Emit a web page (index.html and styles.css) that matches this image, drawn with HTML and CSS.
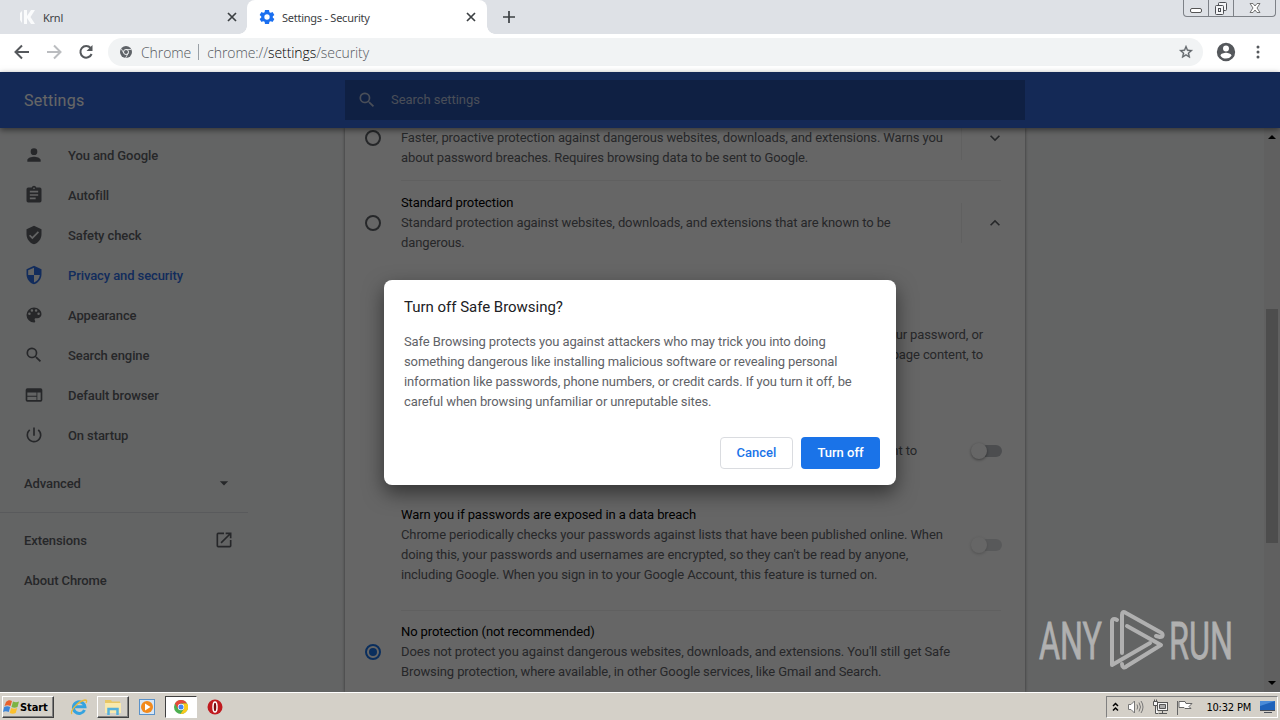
FILE: index.html
```
<!DOCTYPE html>
<html lang="en">
<head>
    <meta charset="UTF-8">
    <meta name="viewport" content="width=device-width, initial-scale=1.0">
    <title>Settings - Security</title>
    <link rel="stylesheet" href="styles.css">
</head>
<body>
    <div class="tabs">
        <div class="tab">
            <svg class="tab-icon" width="16" height="16" viewBox="0 0 16 16"><path fill="#fafbfc" d="M0 4l2-2v12l-2-3zM4 1h3v14H4zM7 7l4-6h4l-4.500 7 4.500 7h-4L7 9z"/></svg>
            <span class="tab-title">Krnl</span>
            <svg class="tab-close" width="10" height="10" viewBox="0 0 10 10"><path d="M1 1l8 8M9 1L1 9"/></svg>
        </div>
        <div class="tab active">
            <svg class="tab-icon" width="16" height="16" viewBox="0 0 24 24"><path fill="#1a6ff0" d="M20.7 13l.1-1-.1-1 2-1.600c.3-.2.3-.5.1-.8l-2.200-3.700c-.1-.2-.4-.3-.7-.2l-2.500 1-1.800-1-.4-2.600c0-.3-.2-.5-.5-.5H9.300c-.3 0-.5.2-.5.5L8.400 4.700l-1.800 1-2.500-1c-.3-.1-.6 0-.7.2L1.200 8.600c-.2.3-.1.6.1.8l2 1.600v2l-2 1.600c-.2.2-.3.5-.1.8l2.200 3.700c.1.2.4.3.7.2l2.500-1 1.800 1 .4 2.600c0 .3.2.5.5.5h5.400c.3 0 .5-.2.500-.5l.4-2.600 1.800-1 2.500 1c.3.1.6 0 .7-.2l2.200-3.700c.2-.3.1-.6-.1-.8zM12 16a4 4 0 1 1 0-8 4 4 0 0 1 0 8z"/></svg>
            <span class="tab-title">Settings - Security</span>
            <svg class="tab-close" width="10" height="10" viewBox="0 0 10 10"><path d="M1 1l8 8M9 1L1 9"/></svg>
        </div>
        <svg class="new-tab" width="12" height="12" viewBox="0 0 12 12"><path d="M6 0v12M0 6h12"/></svg>
        <div class="window-buttons">
            <span><svg width="14" height="16" viewBox="0 0 14 16"><rect x="1.500" y="8.500" width="11" height="4" rx="1.500" fill="#fff" stroke="#555"/></svg></span>
            <span><svg width="14" height="16" viewBox="0 0 14 16"><g fill="#f4f5f7" stroke="#4d4f54"><rect x="4.500" y="2.500" width="8" height="8" rx="1"/><rect x="1.500" y="5.500" width="8" height="9" rx="1"/><rect x="4.500" y="8.500" width="2" height="3"/></g></svg></span>
            <span class="wide"><svg width="14" height="16" viewBox="0 0 14 16"><path d="M2 3.500h3l2 2.500 2-2.500h3L9 8l3 4.500H9L7 10l-2 2.500H2L5 8z" fill="#fff" stroke="#666" stroke-width=".9"/></svg></span>
        </div>
    </div>

    <div class="toolbar">
        <svg class="nav" width="16" height="16" viewBox="0 0 16 16"><path d="M15 8H2M8 1.500L1.500 8 8 14.500"/></svg>
        <svg class="nav off" width="16" height="16" viewBox="0 0 16 16"><path d="M1 8h13M8 1.500L14.500 8 8 14.500"/></svg>
        <svg class="nav" width="16" height="16" viewBox="0 0 16 16"><path d="M12.600 4A5.800 5.800 0 1 0 13.600 10"/><path d="M14.500 1v6h-6z" class="tip"/></svg>
        <div class="address">
            <svg width="12" height="12" viewBox="0 0 12 12"><circle cx="6" cy="6" r="6" fill="#5f6368"/><circle cx="6" cy="6" r="2.500" fill="none" stroke="#f1f3f4"/><path d="M6 3.500h5.300M3.800 7.200L1.200 2.700M8.200 7.200L5.600 12" stroke="#f1f3f4" stroke-width=".8"/></svg>
            <span class="origin">Chrome</span>
            <span class="pipe"></span>
            <span class="url">chrome://<b>settings</b>/security</span>
            <svg class="star" width="16" height="16" viewBox="0 0 24 24"><path fill="#5f6368" stroke="#5f6368" stroke-width=".5" d="M22 9.240l-7.190-.62L12 2 9.190 8.630 2 9.240l5.460 4.730L5.820 21 12 17.270 18.180 21l-1.630-7.030zM12 15.400l-3.760 2.270 1-4.280-3.320-2.880 4.380-.38L12 6.100l1.710 4.040 4.380.38-3.320 2.880 1 4.280z"/></svg>
        </div>
        <svg class="avatar" width="22" height="22" viewBox="0 0 24 24"><path fill="#55585c" d="M12 2a10 10 0 1 0 0 20 10 10 0 0 0 0-20zm0 3a3.200 3.200 0 1 1 0 6.500A3.200 3.200 0 0 1 12 5zm0 14.200a7.200 7.200 0 0 1-6-3.220c.03-2 4-3.080 6-3.080s5.970 1.090 6 3.080a7.200 7.200 0 0 1-6 3.220z"/></svg>
        <svg class="kebab" width="4" height="14" viewBox="0 0 4 14" fill="#55585c"><circle cx="2" cy="2" r="1.500"/><circle cx="2" cy="7" r="1.500"/><circle cx="2" cy="12" r="1.500"/></svg>
    </div>

    <div class="page">
        <header class="header">
            <h1>Settings</h1>
            <div class="search">
                <svg width="20" height="20" viewBox="0 0 24 24"><path d="M15.500 14h-.79l-.28-.27a6.500 6.500 0 1 0-.7.700l.27.280v.79l5 4.990L20.490 19zm-6 0a4.500 4.500 0 1 1 0-9 4.500 4.500 0 0 1 0 9z"/></svg>
                <span>Search settings</span>
            </div>
        </header>

        <div class="main">
            <nav class="menu">
                <a class="item"><svg viewBox="0 0 24 24"><path d="M12 12a4 4 0 1 0 0-8 4 4 0 0 0 0 8zm0 2c-2.670 0-8 1.340-8 4v2h16v-2c0-2.660-5.330-4-8-4z"/></svg>You and Google</a>
                <a class="item"><svg viewBox="0 0 24 24"><path d="M19 3h-4.180a3 3 0 0 0-5.640 0H5a2 2 0 0 0-2 2v14a2 2 0 0 0 2 2h14a2 2 0 0 0 2-2V5a2 2 0 0 0-2-2zm-7 0a1 1 0 1 1 0 2 1 1 0 0 1 0-2zm2 14H7v-2h7zm3-4H7v-2h10zm0-4H7V7h10z"/></svg>Autofill</a>
                <a class="item"><svg viewBox="0 0 24 24"><path d="M12 1L3 5v6c0 5.550 3.840 10.740 9 12 5.160-1.260 9-6.450 9-12V5zm-2 16l-4-4 1.410-1.410L10 14.170l6.590-6.590L18 9z"/></svg>Safety check</a>
                <a class="item selected"><svg viewBox="0 0 24 24"><path d="M12 1L3 5v6c0 5.550 3.840 10.740 9 12 5.160-1.260 9-6.450 9-12V5zm0 10.990h7c-.53 4.120-3.280 7.790-7 8.940V12H5V6.300l7-3.110z"/></svg>Privacy and security</a>
                <a class="item"><svg viewBox="0 0 24 24"><path d="M12 3a9 9 0 0 0 0 18c.83 0 1.500-.67 1.500-1.500 0-.39-.15-.74-.39-1.010-.23-.26-.38-.61-.38-.99 0-.83.67-1.500 1.500-1.500H16a5 5 0 0 0 5-5c0-4.420-4.030-8-9-8zm-5.500 9a1.500 1.500 0 1 1 0-3 1.500 1.500 0 0 1 0 3zm3-4a1.500 1.500 0 1 1 0-3 1.500 1.500 0 0 1 0 3zm5 0a1.500 1.500 0 1 1 0-3 1.500 1.500 0 0 1 0 3zm3 4a1.500 1.500 0 1 1 0-3 1.500 1.500 0 0 1 0 3z"/></svg>Appearance</a>
                <a class="item"><svg viewBox="0 0 24 24"><path d="M15.500 14h-.79l-.28-.27a6.500 6.500 0 1 0-.7.700l.27.280v.79l5 4.990L20.490 19zm-6 0a4.500 4.500 0 1 1 0-9 4.500 4.500 0 0 1 0 9z"/></svg>Search engine</a>
                <a class="item"><svg viewBox="0 0 24 24"><path d="M20 4H4a2 2 0 0 0-2 2v12a2 2 0 0 0 2 2h16a2 2 0 0 0 2-2V6a2 2 0 0 0-2-2zm-5 14H4v-4h11zm0-5H4V9h11zm5 5h-4V9h4z"/></svg>Default browser</a>
                <a class="item"><svg viewBox="0 0 24 24"><path d="M13 3h-2v10h2zm4.830 2.170l-1.420 1.420A6.920 6.920 0 0 1 19 12a7 7 0 1 1-11.420-5.420L6.170 5.170A8.930 8.930 0 0 0 3 12a9 9 0 1 0 14.830-6.830z"/></svg>On startup</a>
                <a class="item plain advanced">Advanced<svg viewBox="0 0 24 24"><path d="M7 10l5 5 5-5z"/></svg></a>
                <div class="separator"></div>
                <a class="item plain">Extensions<svg viewBox="0 0 24 24"><path d="M19 19H5V5h7V3H5a2 2 0 0 0-2 2v14a2 2 0 0 0 2 2h14a2 2 0 0 0 2-2v-7h-2zM14 3v2h3.590l-9.830 9.830 1.410 1.410L19 6.410V10h2V3z"/></svg></a>
                <a class="item plain">About Chrome</a>
            </nav>

            <div class="card">
                <div class="option enhanced">
                    <span class="radio"></span>
                    <div class="text">
                        <p>Faster, proactive protection against dangerous websites, downloads, and extensions. Warns you<br>about password breaches. Requires browsing data to be sent to Google.</p>
                    </div>
                    <div class="expand"><svg width="20" height="20" viewBox="0 0 24 24"><path d="M16.590 8.590L12 13.170 7.410 8.590 6 10l6 6 6-6z"/></svg></div>
                </div>
                <div class="option standard">
                    <span class="radio"></span>
                    <div class="text">
                        <h2>Standard protection</h2>
                        <p>Standard protection against websites, downloads, and extensions that are known to be<br>dangerous.</p>
                    </div>
                    <div class="expand"><svg width="20" height="20" viewBox="0 0 24 24"><path d="M12 8l-6 6 1.410 1.410L12 10.830l4.590 4.580L18 14z"/></svg></div>
                </div>
                <div class="details">
                    <p class="bullets">ur password, or<br>page content, to</p>
                    <div class="toggle-row">
                        <p class="report">nt to</p>
                        <span class="toggle"></span>
                    </div>
                    <div class="toggle-row breach">
                        <div class="text">
                            <h2>Warn you if passwords are exposed in a data breach</h2>
                            <p>Chrome periodically checks your passwords against lists that have been published online. When<br>doing this, your passwords and usernames are encrypted, so they can't be read by anyone,<br>including Google. When you sign in to your Google Account, this feature is turned on.</p>
                        </div>
                        <span class="toggle disabled"></span>
                    </div>
                </div>
                <div class="option none">
                    <span class="radio checked"></span>
                    <div class="text">
                        <h2>No protection (not recommended)</h2>
                        <p>Does not protect you against dangerous websites, downloads, and extensions. You'll still get Safe<br>Browsing protection, where available, in other Google services, like Gmail and Search.</p>
                    </div>
                </div>
            </div>

            <div class="scrollbar">
                <svg width="8" height="4" viewBox="0 0 8 4"><path d="M0 4l4-4 4 4z"/></svg>
                <div class="thumb"></div>
                <svg width="8" height="4" viewBox="0 0 8 4"><path d="M0 0h8L4 4z"/></svg>
            </div>
        </div>

        <div class="backdrop">
            <div class="dialog">
                <h3>Turn off Safe Browsing?</h3>
                <p>Safe Browsing protects you against attackers who may trick you into doing<br>something dangerous like installing malicious software or revealing personal<br>information like passwords, phone numbers, or credit cards. If you turn it off, be<br>careful when browsing unfamiliar or unreputable sites.</p>
                <div class="actions">
                    <button class="cancel">Cancel</button>
                    <button class="confirm">Turn off</button>
                </div>
            </div>
        </div>

        <svg class="watermark" width="210" height="70" viewBox="0 0 210 70">
            <g class="letters">
                <text x="1" y="51" textLength="63" lengthAdjust="spacingAndGlyphs">ANY</text>
                <text x="131" y="51" textLength="64" lengthAdjust="spacingAndGlyphs">RUN</text>
            </g>
            <g fill="none" stroke="#b0b0b0" stroke-width="4" stroke-linecap="round" stroke-linejoin="round">
                <path d="M79 12c-3-2-5-1-5 2v43L112 35"/>
                <path d="M84 45V7c0-3 1-4 4-2l34 19c4 2 3 5 0 5l-4-1"/>
                <path d="M89 18l34 19-34 21c-3 3-5 1-5-2"/>
            </g>
        </svg>
    </div>

    <div class="taskbar">
        <div class="start">
            <svg width="17" height="16" viewBox="0 0 17 16"><path fill="#e8612c" d="M3 3c2-2 4-2 6-1L7.500 7c-2-1-4-1-6 0z"/><path fill="#7cb342" d="M10 2.500c2 1 4 1 6 0L14.500 8c-2 1-4 1-6 0z"/><path fill="#3d85d8" d="M1.200 8c2-1 4-1 6 0L5.700 13c-2-1-4-1-5.700 0z"/><path fill="#fbc02d" d="M8.200 9c2 1 4 1 6 0l-1.500 5c-2 1-4 1-6 0z"/></svg>
            Start
        </div>
        <div class="launch ie">
            <svg width="18" height="18" viewBox="0 0 18 18"><path fill="none" stroke="#35a3df" stroke-width="3" d="M14.500 12a5.800 5.800 0 1 1 .4-3.300H5"/><path fill="none" stroke="#e9b93a" stroke-width="1.300" d="M2 16C-1 14 8 3 15 2c2 0 2 1 1 3"/></svg>
        </div>
        <div class="launch raised">
            <svg width="18" height="18" viewBox="0 0 18 18"><path fill="#e8c766" d="M1 2h6l1 1.500h8V15H1z"/><path fill="#f9e9ad" d="M1 5h16v10H1z"/><path fill="none" stroke="#55b1dc" stroke-width="2.500" d="M4.500 17v-6h9v6"/></svg>
        </div>
        <div class="launch">
            <svg width="16" height="16" viewBox="0 0 16 16"><rect x=".5" y=".5" width="15" height="15" fill="#d6e6f6" stroke="#5a92c9"/><circle cx="8" cy="8" r="6" fill="#f28a1c"/><path fill="#fff" d="M6 4.500v7L11.500 8z"/></svg>
        </div>
        <div class="launch pressed">
            <svg width="14" height="14" viewBox="0 0 14 14"><circle cx="7" cy="7" r="7" fill="#4caf50"/><path fill="#e5493a" d="M.9 3.500A7 7 0 0 1 13.100 3.500H7L4 8.800z"/><path fill="#fbc91b" d="M13.100 3.500A7 7 0 0 1 6.500 14L10 8.800 8.500 3.500z"/><circle cx="7" cy="7" r="3.200" fill="#fff"/><circle cx="7" cy="7" r="2.500" fill="#4285f4"/></svg>
        </div>
        <div class="launch opera">
            <svg width="16" height="16" viewBox="0 0 16 16"><circle cx="8" cy="8" r="7.500" fill="#c01a1f"/><ellipse cx="8" cy="8" rx="2" ry="5" fill="#7b0a0e" stroke="#fff" stroke-width="1.500"/></svg>
        </div>
        <div class="tray">
            <svg width="7" height="10" viewBox="0 0 7 10"><path fill="none" stroke="#000" stroke-width="1.500" d="M1 4l2.500-2.500L6 4M1 8.500L3.500 6 6 8.500"/></svg>
            <svg class="sound" width="16" height="14" viewBox="0 0 16 14"><g fill="none" stroke="#777"><path fill="#fff" d="M.5 4.500H3L6.500 1v12L3 9.500H.5z"/><path d="M9 4.500q1.500 2.500 0 5M11 2.500q3 4.500 0 9M13 1q4 6 0 12"/></g></svg>
            <svg class="network" width="17" height="16" viewBox="0 0 17 16"><g fill="#f5f5f5" stroke="#555"><rect x="5.500" y="3.500" width="10" height="8"/><path fill="#aaa" d="M7.500 5.500h6v4h-6z"/><path d="M7 14.500h8M10.500 12v2"/><path d="M1.500 2.500h4v4h-4zM3.500 6.500v8h3M2.500.5v2M4.500.5v2"/></g></svg>
            <svg class="flag" width="17" height="15" viewBox="0 0 17 15"><path fill="#fff" stroke="#666" d="M1.500 1v14M3 1.500h6l1 2h6l-3 3 2 2H9l-1-1H3z"/></svg>
            <span class="clock">10:32 PM</span>
            <svg class="desktop" width="16" height="14" viewBox="0 0 16 14"><path fill="#1e62ba" d="M1 1h15v9H1z"/><path fill="#4a8bd8" d="M1 1h15L1 6z"/><path fill="#4a4f58" d="M1 10h15v1H1zM5 12h8v1H5z"/></svg>
        </div>
    </div>
</body>
</html>
```
FILE: styles.css
```
* {
    box-sizing: border-box;
}

body {
    margin: 0;
    width: 1280px;
    height: 720px;
    overflow: hidden;
    display: flex;
    flex-direction: column;
    font-family: Roboto, sans-serif;
    font-size: 13px;
    background-color: #fff;
}

h1, h2, h3, p {
    margin: 0;
    font-weight: 400;
}

svg {
    display: block;
    flex-shrink: 0;
}

/* Tab strip */
.tabs {
    height: 34px;
    flex-shrink: 0;
    display: flex;
    background-color: #dee1e6;
}

.tab {
    width: 247px;
    height: 34px;
    padding: 0 10px 0 20px;
    display: flex;
    align-items: center;
}

.tab.active {
    position: relative;
    width: 240px;
    padding: 0 11px 0 12px;
    background-color: #fff;
    border-radius: 8px 8px 0 0;
}

.tab.active::before, .tab.active::after {
    content: "";
    position: absolute;
    bottom: 0;
    width: 8px;
    height: 8px;
}

.tab.active::before {
    left: -8px;
    background: radial-gradient(circle at 0 0, transparent 7.5px, #fff 8px);
}

.tab.active::after {
    right: -8px;
    background: radial-gradient(circle at 100% 0, transparent 7.5px, #fff 8px);
}

.tab-title {
    margin-left: 7px;
    flex: 1;
    font-family: "Noto Sans", sans-serif;
    font-size: 11px;
    letter-spacing: -0.25px;
    color: #3c4043;
}

.tab-close path, .new-tab path {
    fill: none;
    stroke: #3c4043;
    stroke-width: 1.7;
}

.new-tab {
    margin: 11px 0 0 16px;
}

.window-buttons {
    margin-left: auto;
    margin-right: 4px;
    height: 17px;
    display: flex;
    border: 1px solid #7d8187;
    border-top: none;
    border-radius: 0 0 4px 4px;
}

.window-buttons span {
    width: 25px;
    display: flex;
    justify-content: center;
    border-right: 1px solid #7d8187;
}

.window-buttons .wide {
    width: 41px;
    border-right: none;
}

/* Toolbar */
.toolbar {
    height: 38px;
    flex-shrink: 0;
    padding: 0 15px 2px 14px;
    display: flex;
    align-items: center;
    gap: 16px;
}

.nav path {
    fill: none;
    stroke: #55585c;
    stroke-width: 2;
}

.nav .tip {
    fill: #55585c;
    stroke: none;
}

.nav.off path {
    stroke: #bbbdc0;
}

.address {
    width: 1095px;
    height: 28px;
    flex-shrink: 0;
    margin-left: -2px;
    padding: 0 9px 0 12px;
    display: flex;
    align-items: center;
    border-radius: 14px;
    background-color: #f1f3f4;
    font-family: "Open Sans", sans-serif;
    font-weight: 300;
    font-size: 14px;
    letter-spacing: -0.08px;
    color: #55595e;
}

.origin {
    margin-left: 9px;
}

.pipe {
    width: 1px;
    height: 16px;
    margin: 0 8px 0 7px;
    background-color: #9aa0a6;
}

.url b {
    font-weight: 300;
    color: #000;
}

.star {
    margin-left: auto;
}

.avatar {
    margin-left: -4px;
}

.kebab {
    margin-left: 3px;
}

/* Settings page */
.page {
    position: relative;
    height: 620px;
    flex-shrink: 0;
    display: flex;
    flex-direction: column;
    background-color: #f8f9fa;
}

.header {
    position: relative;
    height: 56px;
    flex-shrink: 0;
    display: flex;
    align-items: center;
    background-color: #3367d6;
    box-shadow: 0 2px 6px rgba(0, 0, 0, 0.5);
}

.header h1 {
    width: 345px;
    padding-left: 24px;
    font-size: 16px;
    letter-spacing: 0.25px;
    color: #fff;
}

.search {
    width: 680px;
    height: 40px;
    padding: 0 0 1px 12px;
    display: flex;
    align-items: center;
    gap: 14px;
    background-color: rgba(0, 0, 0, 0.22);
    letter-spacing: -0.05px;
    color: #b7c2db;
}

.search svg {
    fill: #b7c2db;
}

.main {
    height: 564px;
    display: flex;
    overflow: hidden;
}

.menu {
    width: 345px;
    padding-top: 7px;
}

.item {
    width: 266px;
    height: 40px;
    padding-left: 24px;
    display: flex;
    align-items: center;
    gap: 24px;
    font-weight: 500;
    letter-spacing: -0.1px;
    color: #5f6368;
}

.item svg {
    width: 20px;
    height: 20px;
    fill: #5f6368;
}

.item.selected {
    color: #2f6fe6;
}

.item.selected svg {
    fill: #2f6fe6;
}

.item.plain {
    justify-content: space-between;
    padding-right: 32px;
}

.advanced {
    margin-top: 8px;
}

.separator {
    width: 248px;
    height: 1px;
    margin: 9px 0 7px;
    background-color: #dfe1e5;
}

.card {
    width: 680px;
    background-color: #fff;
    box-shadow: 0 0 3px rgba(0, 0, 0, 0.5);
    line-height: 20px;
    letter-spacing: -0.11px;
    white-space: nowrap;
    color: #5f6368;
}

.card h2 {
    font-size: 13px;
    color: #000;
}

.option {
    padding-left: 20px;
    display: flex;
    align-items: center;
}

.option .text {
    width: 560px;
    margin-left: 20px;
}

.enhanced {
    height: 52px;
    align-items: flex-start;
}

.enhanced .radio {
    margin-top: 2px;
}

.standard {
    height: 85px;
    position: relative;
}

.standard::before, .none::before {
    content: "";
    position: absolute;
    top: 0;
    left: 56px;
    right: 24px;
    height: 1px;
    background-color: #f1f1f1;
}

.radio {
    width: 16px;
    height: 16px;
    flex-shrink: 0;
    border: 2px solid #5f6368;
    border-radius: 50%;
}

.radio.checked {
    padding: 2px;
    border-color: #1a73e8;
    background-color: #1a73e8;
    background-clip: content-box;
}

.expand {
    height: 40px;
    padding-left: 23px;
    display: flex;
    align-items: center;
    border-left: 1px solid #f1f1f1;
}

.enhanced .expand {
    align-items: flex-start;
    height: 32px;
}

.expand svg {
    fill: #5f6368;
}

.details {
    height: 345px;
    padding: 60px 23px 0 56px;
}

.bullets {
    width: 582px;
    text-align: right;
}

.toggle-row {
    margin-top: 76px;
    display: flex;
    align-items: center;
    justify-content: space-between;
}

.toggle-row.breach {
    margin-top: 44px;
}

.report {
    width: 516px;
    text-align: right;
}

.toggle {
    position: relative;
    width: 30px;
    height: 12px;
    flex-shrink: 0;
    border-radius: 6px;
    background-color: #bdc1c6;
}

.toggle::before {
    content: "";
    position: absolute;
    top: -2px;
    left: -1px;
    width: 16px;
    height: 16px;
    border-radius: 50%;
    background-color: #fff;
    box-shadow: 0 1px 3px rgba(0, 0, 0, 0.4);
}

.toggle.disabled {
    opacity: 0.5;
}

.none {
    position: relative;
    height: 84px;
}

.scrollbar {
    width: 16px;
    margin-left: auto;
    padding: 7px 0;
    display: flex;
    flex-direction: column;
    align-items: center;
    background-color: #f1f1f1;
}

.thumb {
    width: 12px;
    height: 234px;
    margin: 170px 0 138px;
    background-color: #c1c1c1;
}

/* Dialog */
.backdrop {
    position: absolute;
    inset: 0;
    display: flex;
    align-items: center;
    justify-content: center;
    background-color: rgba(0, 0, 0, 0.6);
}

.dialog {
    width: 512px;
    height: 205px;
    padding: 16px 16px 16px 20px;
    display: flex;
    flex-direction: column;
    border-radius: 8px;
    background-color: #fff;
    box-shadow: 0 8px 20px rgba(0, 0, 0, 0.5);
    white-space: nowrap;
}

.dialog h3 {
    font-size: 15px;
    line-height: 22px;
    letter-spacing: -0.02px;
    color: #202124;
}

.dialog p {
    margin-top: 14px;
    line-height: 20px;
    letter-spacing: -0.11px;
    color: #5f6368;
}

.actions {
    margin-top: auto;
    display: flex;
    justify-content: flex-end;
    gap: 8px;
}

.actions button {
    height: 32px;
    padding: 0;
    font: 500 13px Roboto, sans-serif;
    border-radius: 4px;
}

.actions .cancel {
    width: 73px;
    border: 1px solid #dadce0;
    background-color: #fff;
    color: #1a73e8;
}

.actions .confirm {
    width: 79px;
    border: none;
    background-color: #1a73e8;
    color: #fff;
}

.watermark {
    position: absolute;
    left: 1038px;
    top: 536px;
}

.letters {
    font-family: Roboto, sans-serif;
    font-size: 52px;
    fill: #b0b0b0;
    stroke: #b0b0b0;
    stroke-width: 0.8;
}

/* Taskbar */
.taskbar {
    height: 28px;
    flex-shrink: 0;
    padding: 3px 2px 2px;
    display: flex;
    align-items: center;
    background-color: #d4d0c8;
    border-top: 1px solid #fff;
    font-family: "DejaVu Sans Condensed", "DejaVu Sans", sans-serif;
    font-size: 11px;
}

.start, .raised {
    border: 1px solid;
    border-color: #fff #404040 #404040 #fff;
    box-shadow: inset -1px -1px #808080;
}

.start {
    width: 52px;
    height: 22px;
    display: flex;
    align-items: center;
    font-weight: bold;
    letter-spacing: -0.1px;
}

.launch {
    width: 32px;
    height: 22px;
    display: flex;
    align-items: center;
    justify-content: center;
}

.ie {
    width: 43px;
    padding-left: 7px;
}

.launch + .launch {
    margin-left: 2px;
}

.ie + .raised {
    margin-left: 0;
}

.pressed {
    border: 1px solid;
    border-color: #404040 #fff #fff #404040;
    background-color: #fff;
}

.tray {
    width: 172px;
    height: 22px;
    margin-left: auto;
    padding-left: 5px;
    display: flex;
    align-items: center;
    border: 1px solid;
    border-color: #808080 #fff #fff #808080;
}

.sound {
    margin-left: 9px;
}

.network {
    margin-left: 8px;
}

.flag {
    margin-left: 7px;
}

.clock {
    margin-left: auto;
    letter-spacing: -0.2px;
}

.desktop {
    margin: 0 2px 0 8px;
}
```
